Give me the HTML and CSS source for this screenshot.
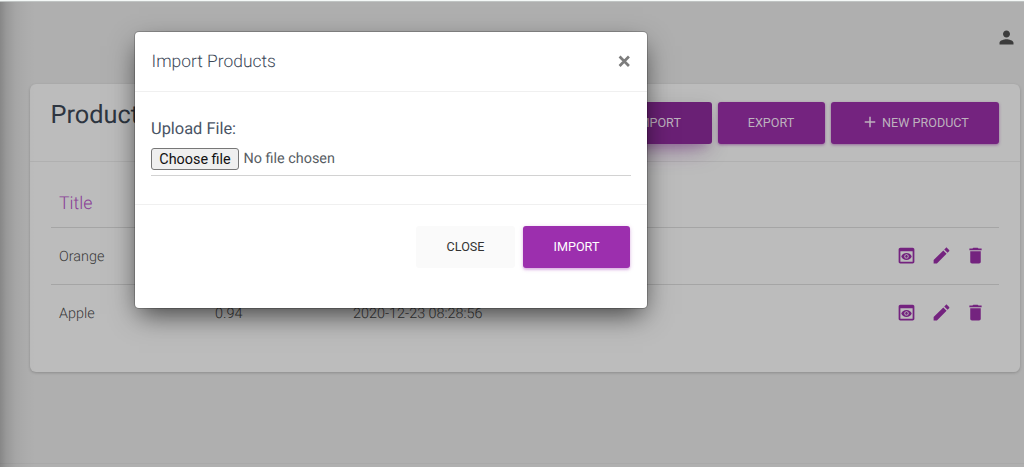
FILE: index.html
```html
<!DOCTYPE html>
<html lang="en">
<head>
<meta charset="utf-8">
<title>Products</title>
<link rel="stylesheet" href="styles.css">
</head>
<body>
<svg width="0" height="0" class="sprite">
  <symbol id="preview" viewBox="0 0 24 24"><path fill-rule="evenodd" d="M19 3H5c-1.110 0-2 .9-2 2v14c0 1.100.89 2 2 2h14c1.100 0 2-.9 2-2V5c0-1.100-.9-2-2-2zm0 16H5V7h14v12zm-5.500-6c0 .83-.67 1.500-1.500 1.500s-1.500-.67-1.500-1.500.67-1.500 1.500-1.500 1.500.67 1.500 1.500zM12 9c-2.730 0-5.060 1.660-6 4 .94 2.340 3.270 4 6 4s5.060-1.660 6-4c-.94-2.340-3.270-4-6-4zm0 6.500c-1.380 0-2.500-1.120-2.500-2.500s1.120-2.500 2.500-2.500 2.500 1.120 2.500 2.500-1.120 2.500-2.500 2.500z"/></symbol>
  <symbol id="edit" viewBox="0 0 24 24"><path d="M3 17.250V21h3.750L17.810 9.940l-3.750-3.750L3 17.250zM20.710 7.040c.39-.39.39-1.020 0-1.410l-2.340-2.340c-.39-.39-1.020-.39-1.410 0l-1.830 1.830 3.750 3.750 1.830-1.830z"/></symbol>
  <symbol id="delete" viewBox="0 0 24 24"><path d="M6 19c0 1.100.9 2 2 2h8c1.100 0 2-.9 2-2V7H6v12zM19 4h-3.500l-1-1h-5l-1 1H5v2h14V4z"/></symbol>
</svg>
<div class="page">
  <nav class="topbar">
    <svg class="person" viewBox="0 0 24 24"><path d="M12 12c2.210 0 4-1.790 4-4s-1.790-4-4-4-4 1.790-4 4 1.790 4 4 4zm0 2c-2.670 0-8 1.340-8 4v2h16v-2c0-2.660-5.330-4-8-4z"/></svg>
  </nav>
  <main class="card">
    <header class="card-header">
      <h1 class="card-title">Products</h1>
      <div class="actions">
        <button class="btn dim focused">Import</button>
        <button class="btn dim">Export</button>
        <button class="btn dim wide"><svg class="plus" viewBox="0 0 24 24"><path d="M19 13h-6v6h-2v-6H5v-2h6V5h2v6h6v2z"/></svg>New Product</button>
      </div>
    </header>
    <div class="table">
      <div class="row head"><span>Title</span></div>
      <div class="row"><span>Orange</span><span></span><span></span>
        <div class="icons"><svg><use href="#preview"/></svg><svg><use href="#edit"/></svg><svg><use href="#delete"/></svg></div></div>
      <div class="row"><span>Apple</span><span>0.94</span><span>2020-12-23 08:28:56</span>
        <div class="icons"><svg><use href="#preview"/></svg><svg><use href="#edit"/></svg><svg><use href="#delete"/></svg></div></div>
    </div>
  </main>
  <footer class="footer"></footer>
</div>
<div class="sidebar-shadow"></div>
<section class="modal">
  <header class="modal-header">
    <h2 class="modal-title">Import Products</h2>
    <svg class="close" viewBox="0 0 12 12"><path d="M1.500 1.500l9 9M10.500 1.500l-9 9"/></svg>
  </header>
  <div class="modal-body">
    <div class="label">Upload File:</div>
    <div class="file"><button class="choose">Choose file</button><span>No file chosen</span></div>
  </div>
  <footer class="modal-footer">
    <button class="btn plain">Close</button>
    <button class="btn">Import</button>
  </footer>
</section>
</body>
</html>
```

FILE: styles.css
```css
* { box-sizing: border-box; }
body {
  margin: 0;
  height: 467px;
  overflow: hidden;
  position: relative;
  background: #afafaf;
  font-family: Roboto, "Liberation Sans", sans-serif;
  font-weight: 300;
  text-rendering: geometricPrecision;
}
.sprite { position: absolute; }
.page {
  height: 467px;
  display: flex;
  flex-direction: column;
  border-top: 1px solid #f4f8f7;
  box-shadow: inset 0 1px 0 #bfc3c2;
}
.topbar {
  height: 83px;
  flex: none;
  display: flex;
  justify-content: flex-end;
  padding: 25.500px 7px 0 0;
}
.person { width: 21px; height: 21px; fill: #3c3c3c; }
.card {
  width: 990px;
  height: 288px;
  flex: none;
  margin-left: 30px;
  background: #bcbcbc;
  border-radius: 6px;
  box-shadow: 0 1px 3px rgba(0, 0, 0, .2);
}
.card-header {
  height: 78px;
  display: flex;
  justify-content: space-between;
  padding: 18px 21.500px 0 20.500px;
  border-bottom: 1px solid #b0b0b0;
}
.card-title {
  margin: -3px 0 0;
  font-size: 25.300px;
  line-height: 34px;
  font-weight: 400;
  color: #2d3540;
}
.actions { display: flex; gap: 6px; }
.btn {
  width: 107px;
  height: 42px;
  padding: 0 0 1px;
  display: flex;
  align-items: center;
  justify-content: center;
  border: 0;
  border-radius: 3px;
  background: #9c2fae;
  color: #fff;
  font: 400 12.600px Roboto, "Liberation Sans", sans-serif;
  text-transform: uppercase;
  box-shadow: 0 2px 2px rgba(156, 39, 176, .2), 0 1px 4px rgba(156, 39, 176, .25);
}
.btn.dim { padding-bottom: 2px; background: #74237f; color: #bdb2be; box-shadow: 0 1px 3px rgba(116, 35, 127, .55); }
.btn.focused { background: #6a2075; box-shadow: 0 13px 24px -11px rgba(116, 29, 131, .5), 0 4px 20px rgba(0, 0, 0, .1), 0 7px 8px -5px rgba(116, 29, 131, .25); }
.btn.wide { width: 168px; }
.btn.plain { width: 99px; background: #fafafa; color: #333; box-shadow: none; }
.plus { width: 18px; height: 18px; margin: 0 3px 0 1px; fill: #bdb2be; }
.table { padding: 18px 21px 0; }
.row {
  height: 57px;
  display: grid;
  grid-template-columns: 156px 138px 1fr auto;
  align-items: center;
  padding: 0 13px 0 8px;
  border-bottom: 1px solid #a5a5a5;
  font-size: 14.400px;
  color: #393939;
}
.row.head { height: 48px; font-size: 17.700px; color: #8a3c96; }
.row:last-child { border-bottom: 0; padding-bottom: 1px; }
.icons { display: flex; gap: 13.500px; padding-bottom: 1px; }
.icons svg { width: 21px; height: 21px; fill: #74237f; }
.footer { margin-top: auto; height: 4px; border-top: 1px solid #a9a9a9; }
.sidebar-shadow {
  position: absolute;
  inset: 2px auto 0 0;
  width: 36px;
  background: linear-gradient(90deg, rgba(0,0,0,.23), rgba(0,0,0,.13) 18%, rgba(0,0,0,.05) 45%, rgba(0,0,0,.015) 75%, transparent);
}
.modal {
  position: absolute;
  left: 135px;
  top: 32px;
  width: 512px;
  height: 276px;
  background: #fff;
  border-radius: 4px;
  box-shadow: 0 0 0 1px rgba(0, 0, 0, .2), 0 10px 26px -4px rgba(0, 0, 0, .68);
}
.modal-header {
  height: 60px;
  display: flex;
  align-items: center;
  justify-content: space-between;
  padding: 0 17px 0 16.500px;
  border-bottom: 1px solid #f0f0f0;
}
.modal-title { margin: 0; font-size: 17.400px; font-weight: 300; color: #3c4858; }
.close { width: 12.500px; height: 12.500px; margin-bottom: 1px; fill: none; stroke: #7c7c7c; stroke-width: 2.600; }
.modal-body {
  height: 113px;
  padding: 26px 16px 0;
  border-bottom: 1px solid #f0f0f0;
}
.label { font-size: 16.400px; line-height: 24px; font-weight: 400; color: #495465; }
.file {
  height: 34px;
  display: flex;
  align-items: center;
  gap: 4.500px;
  border-bottom: 1px solid #d2d2d2;
  font-size: 14.400px;
  font-weight: 400;
  color: #575d63;
}
.choose {
  width: 88px;
  height: 22px;
  padding: 1px 0 0;
  border: 1px solid #777;
  border-radius: 3px;
  background: #efefef;
  color: #111;
  font: 400 14.400px Roboto, "Liberation Sans", sans-serif;
}
.modal-footer {
  display: flex;
  justify-content: flex-end;
  gap: 8px;
  padding: 21px 17px 0;
}
```
